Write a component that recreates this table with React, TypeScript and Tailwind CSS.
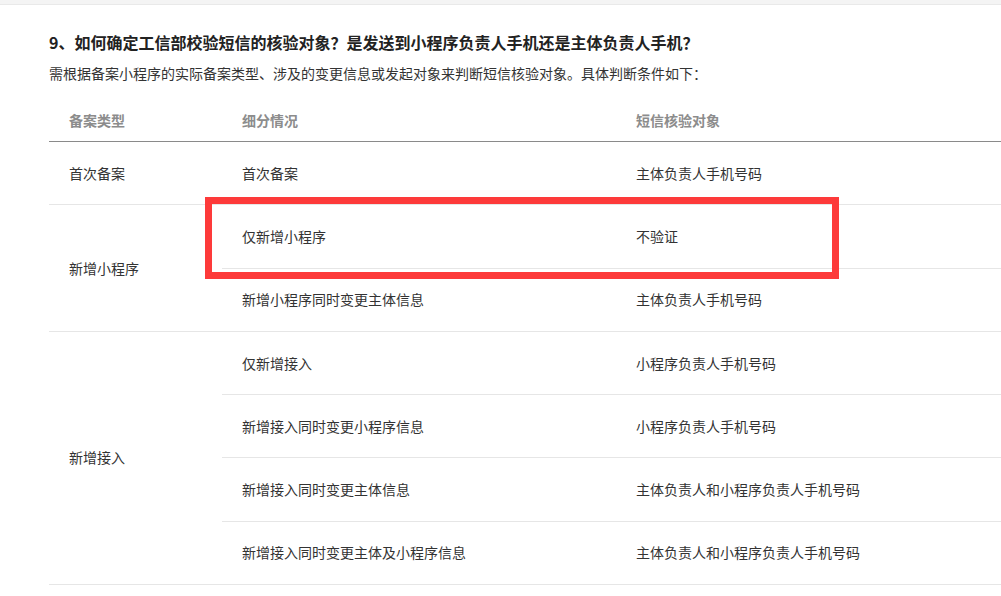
import React from "react";

type Group = { type: string; rows: { detail: string; target: string }[] };

const groups: Group[] = [
  {
    type: "首次备案",
    rows: [{ detail: "首次备案", target: "主体负责人手机号码" }],
  },
  {
    type: "新增小程序",
    rows: [
      { detail: "仅新增小程序", target: "不验证" },
      { detail: "新增小程序同时变更主体信息", target: "主体负责人手机号码" },
    ],
  },
  {
    type: "新增接入",
    rows: [
      { detail: "仅新增接入", target: "小程序负责人手机号码" },
      { detail: "新增接入同时变更小程序信息", target: "小程序负责人手机号码" },
      { detail: "新增接入同时变更主体信息", target: "主体负责人和小程序负责人手机号码" },
      { detail: "新增接入同时变更主体及小程序信息", target: "主体负责人和小程序负责人手机号码" },
    ],
  },
];

export default function App() {
  return (
    <div
      className="w-[1001px] h-[596px] overflow-hidden bg-white text-[#333]"
      style={{ fontFamily: '"Noto Sans CJK SC", "Noto Sans", sans-serif' }}
    >
      <div className="h-[5px] bg-[#f4f4f4] border-b border-[#e9e9e9]" />

      <div className="pl-[49px] pt-[25px]">
        <h2 className="text-[16px] leading-[24px] font-bold text-[#222]">
          9、如何确定工信部校验短信的核验对象？是发送到小程序负责人手机还是主体负责人手机？
        </h2>
        <p className="mt-[8px] text-[14px] leading-[22px] text-[#333]">
          需根据备案小程序的实际备案类型、涉及的变更信息或发起对象来判断短信核验对象。具体判断条件如下：
        </p>

        <div className="relative mt-[16px]">
          {/* header */}
          <div className="flex h-[42px] items-center border-b border-[#8a8a8a] text-[14px] font-semibold text-[#8c8c8c]">
            <div className="w-[173px] pl-5">备案类型</div>
            <div className="w-[394px] pl-5">细分情况</div>
            <div className="flex-1 pl-5">短信核验对象</div>
          </div>

          {groups.map((g) => (
            <div key={g.type} className="flex border-b border-[#e6e6e6] text-[14px]">
              <div className="w-[173px] shrink-0 pl-5 flex items-center">{g.type}</div>
              <div className="flex-1 flex flex-col">
                {g.rows.map((r, i) => (
                  <div
                    key={r.detail}
                    className={
                      "flex items-center " +
                      (i < g.rows.length - 1 ? "h-[63.3px] border-b border-[#e6e6e6]" : "h-[62.3px]")
                    }
                  >
                    <div className="w-[394px] shrink-0 pl-5">{r.detail}</div>
                    <div className="flex-1 pl-5">{r.target}</div>
                  </div>
                ))}
              </div>
            </div>
          ))}

          {/* annotation */}
          <div className="absolute left-[156px] top-[97px] w-[634px] h-[82px] border-[7px] border-[#fd3a3a]" />
        </div>
      </div>
    </div>
  );
}
